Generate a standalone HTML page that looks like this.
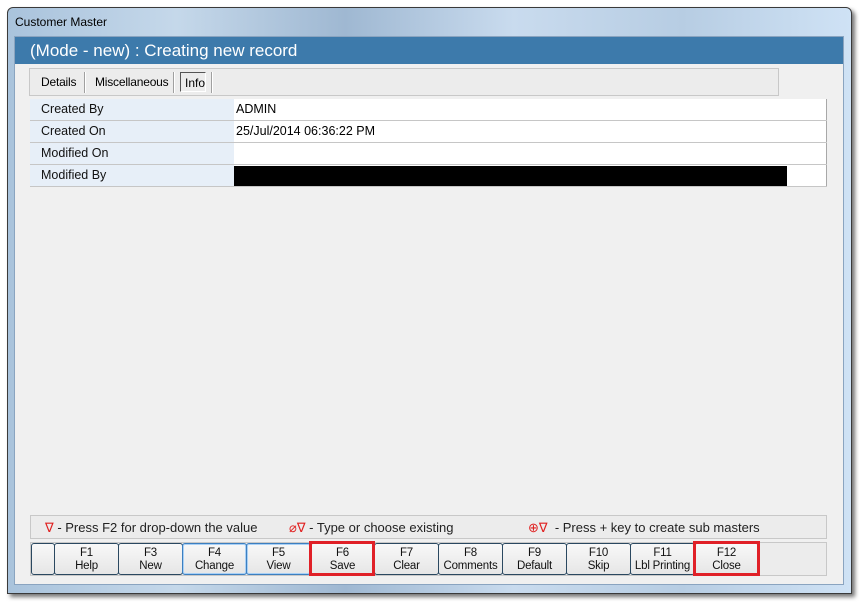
<!DOCTYPE html>
<html><head><meta charset="utf-8"><style>
*{margin:0;padding:0;box-sizing:border-box}
body{width:864px;height:607px;background:#fff;position:relative;overflow:hidden;font-family:"Liberation Sans",sans-serif;}
.abs{position:absolute}
.win{left:7px;top:7px;width:845px;height:587px;border:1px solid #3a3a3a;border-radius:6px 6px 0 0;background:linear-gradient(90deg,#a9c3dc 0%,#c5d8ea 20%,#9fb8d2 40%,#c9dbee 60%,#b7cde3 80%,#cfe2f5 100%);box-shadow:3px 3px 4px rgba(0,0,0,.55)}
.title{left:15px;top:15px;font-size:12px;color:#000}
.client{left:14px;top:36px;width:830px;height:549px;background:#f0f0f0;border:1px solid #8aa4c0}
.hdr{left:15px;top:37px;width:828px;height:27px;background:#3d7aab;color:#fff;font-size:17px;padding:4px 0 0 15px}
.tabs{left:29px;top:68px;width:750px;height:28px;border:1px solid #c8c8c8;background:#ececec}
.tab{position:absolute;top:6px;font-size:12px;color:#000;letter-spacing:-0.2px}
.sep{position:absolute;top:3px;width:2px;height:21px;border-left:1px solid #a0a0a0;border-right:1px solid #fff}
.row{position:absolute;left:30px;width:797px;height:22px;border-bottom:1px solid #c6c6c6}
.lab{position:absolute;left:0;top:0;width:204px;height:21px;background:#e7eff8;font-size:12.5px;padding:3px 0 0 11px;color:#111}
.val{position:absolute;left:204px;top:0;width:593px;height:21px;background:#fff;font-size:12.5px;padding:3px 0 0 2px;border-right:1px solid #a8a8a8}
.hint{left:30px;top:515px;width:797px;height:24px;border:1px solid #c8c8c8;background:#ececec;font-size:13px;color:#222}
.hint > span{position:absolute;top:4px;white-space:nowrap}
.red{color:#e02020}
.bar{left:30px;top:542px;width:797px;height:34px;border:1px solid #c8c8c8;background:#ececec}
.btn{position:absolute;top:543px;height:32px;border:1px solid #2a4860;border-radius:3px;background:linear-gradient(#f8f8f8,#e6e6e6);font-size:11.5px;text-align:center;line-height:13px;padding-top:3px;color:#111;letter-spacing:-0.2px}
.btn.b{border-color:#3c7fc0;box-shadow:inset 0 0 0 1px #a9d0f5}
.hl{position:absolute;border:3px solid #e02027;top:541px;height:35px}
</style></head><body>
<div class="abs win"></div>
<div class="abs title">Customer Master</div>
<div class="abs client"></div>
<div class="abs hdr">(Mode - new) : Creating new record</div>
<div class="abs tabs">
<span class="tab" style="left:11px">Details</span>
<div class="sep" style="left:54px"></div>
<span class="tab" style="left:65px">Miscellaneous</span>
<div class="sep" style="left:143px"></div>
<div style="position:absolute;left:150px;top:3px;width:26px;height:20px;border:1px solid #555;border-right-color:#fff;border-bottom-color:#fff;font-size:12px;padding:3px 0 0 4px">Info</div>
<div class="sep" style="left:181px"></div>
</div>
<div class="row" style="top:99px"><div class="lab">Created By</div><div class="val">ADMIN</div></div>
<div class="row" style="top:121px"><div class="lab">Created On</div><div class="val">25/Jul/2014 06:36:22 PM</div></div>
<div class="row" style="top:143px"><div class="lab">Modified On</div><div class="val"></div></div>
<div class="row" style="top:165px"><div class="lab">Modified By</div><div class="val"><div style="position:absolute;left:0;top:1px;width:553px;height:20px;background:#000"></div></div></div>
<div class="abs hint">
<span style="left:14px"><span class="red">∇</span> - Press F2 for drop-down the value</span>
<span style="left:258px"><span class="red">⌀∇</span> - Type or choose existing</span>
<span style="left:497px"><span class="red">⊕∇</span>&nbsp; - Press + key to create sub masters</span>
</div>
<div class="abs bar"></div>
<div class="btn" style="left:31px;width:24px"></div>
<div class="btn" style="left:54px;width:65px">F1<br>Help</div>
<div class="btn" style="left:118px;width:65px">F3<br>New</div>
<div class="btn b" style="left:182px;width:65px">F4<br>Change</div>
<div class="btn b" style="left:246px;width:65px">F5<br>View</div>
<div class="btn" style="left:310px;width:65px">F6<br>Save</div>
<div class="btn" style="left:374px;width:65px">F7<br>Clear</div>
<div class="btn" style="left:438px;width:65px">F8<br>Comments</div>
<div class="btn" style="left:502px;width:65px">F9<br>Default</div>
<div class="btn" style="left:566px;width:65px">F10<br>Skip</div>
<div class="btn" style="left:630px;width:65px">F11<br>Lbl Printing</div>
<div class="btn" style="left:694px;width:65px">F12<br>Close</div>
<div class="hl" style="left:309px;width:66px"></div>
<div class="hl" style="left:693px;width:67px"></div>
</body></html>
